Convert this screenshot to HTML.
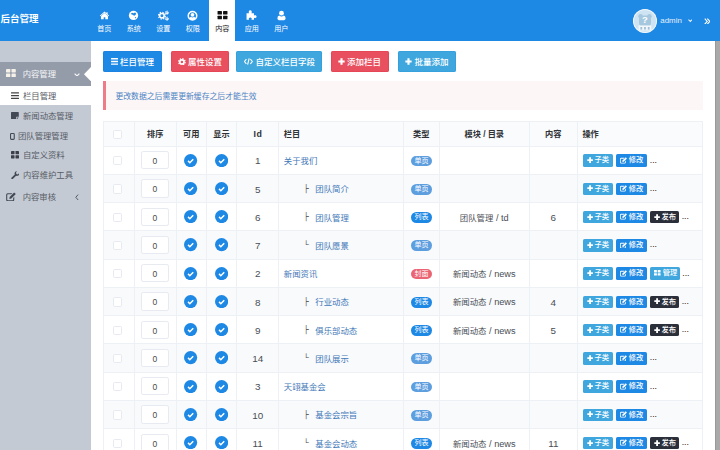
<!DOCTYPE html>
<html lang="zh-CN">
<head>
<meta charset="utf-8">
<title>后台管理</title>
<style>
*{box-sizing:border-box;margin:0;padding:0}
html,body{width:720px;height:450px;overflow:hidden;background:#fff}
body{font-family:"Liberation Sans","Noto Sans CJK SC",sans-serif;font-size:8.4px;color:#444;position:relative;-webkit-text-size-adjust:none}
svg{display:block}
/* header */
#hd{position:absolute;left:0;top:0;width:720px;height:40.8px;background:#1e88e5}
#logo{position:absolute;left:0.5px;top:10px;height:18px;line-height:18px;font-size:9.5px;font-weight:bold;color:#fff;white-space:nowrap}
.nv{position:absolute;top:0;width:26.3px;height:40.8px;color:#fff;text-align:center}
.nv svg{position:absolute;left:50%;top:10px;width:11px;height:11px;margin-left:-5.5px;fill:#fff}
.nv span{position:absolute;left:-4px;right:-4px;top:24.2px;font-size:7.1px;line-height:10px;white-space:nowrap}
.nv.on{background:#fff;color:#222}
.nv.on svg{fill:#111}
#ava{position:absolute;left:633px;top:8.5px;width:24px;height:24px;border-radius:50%;background:#d3e7f5;overflow:hidden}
#adm{position:absolute;left:660.3px;top:14.9px;font-size:7.9px;line-height:12px;color:#e3f0fc}
/* sidebar */
#sb{position:absolute;left:0;top:40.8px;width:91px;height:410px;background:#c4cad4}
.mh{position:absolute;left:0;width:91px;height:23.4px;color:#f4f6f9}
.mh.on{background:#959ca9}
.mh span,.mi span{position:absolute;white-space:nowrap;font-size:8.35px;line-height:12px}
.mi{position:absolute;left:0;width:91px;height:19.6px;color:#575c65}
.mi.on{background:#fff}
#sb svg{position:absolute}
/* main */
#scr{position:absolute;left:714.8px;top:40.8px;width:5.2px;height:410px;background:#a9a9a9;border-left:0.6px solid #999}
.btn{position:absolute;top:51.2px;height:20.5px;border-radius:2.2px;color:#fff;font-weight:500;font-size:8.5px;line-height:20.5px;white-space:nowrap}
.btn svg{position:absolute;fill:#fff}
.btn span{position:absolute;top:1px}
.b1{background:#1e88e5;box-shadow:inset 0 0 0 0.6px #1a7edb}.b2{background:#e8505f;box-shadow:inset 0 0 0 0.6px #e33f50}.b3{background:#3fa7de;box-shadow:inset 0 0 0 0.6px #2f9bdc}
#al{position:absolute;left:103px;top:80.8px;width:600px;height:29px;background:#fdf6f6;border-left:3.1px solid #ee7b88;color:#4a84c4;font-size:7.85px;line-height:31.2px;padding-left:9.4px;white-space:nowrap}
/* table */
#tb{position:absolute;left:102.8px;top:121.4px;width:599.4px;border-collapse:collapse;table-layout:fixed;font-size:8.4px}
#tb th,#tb td{border:0.6px solid #edf0f5;padding:0;text-align:center;vertical-align:middle;white-space:nowrap;overflow:hidden}
#tb th{height:24.2px;background:#fafbfd;color:#2f3338;font-weight:bold;font-size:8.2px;padding-bottom:1.4px}
#tb th .cb{position:relative;top:0.7px}
#tb td{height:28.25px;color:#4a4e55}
#tb td.n,.en{font-size:9.2px}
#tb td.n{padding-top:1.4px;font-size:9.9px}
.cj{position:relative;top:0}
#tb tr.ev td{background:#f9fafc}
#tb .l{text-align:left;padding-left:4.6px}
.cb{display:inline-block;width:9.4px;height:9.2px;border:0.7px solid #e8eaf2;border-radius:1.7px;margin-right:2.2px;background:#fff;vertical-align:middle}
.ip{display:inline-block;width:27.4px;height:18.1px;border:0.7px solid #e8eaf2;border-radius:2.2px;line-height:18px;background:#fff;color:#4a4a4a;font-size:8.5px;vertical-align:middle;position:relative;left:-0.4px}
.ck{display:inline-block;width:13.2px;height:13.2px;vertical-align:middle;position:relative;left:-0.4px}
a{color:#3f78b8;text-decoration:none;position:relative;top:0}
.tr1{display:inline-block;width:19.7px}
.tg{display:inline-block;width:11.8px;color:#444;font-size:7.5px;font-weight:bold;position:relative;top:-1.6px}
.bd{display:inline-block;width:21px;height:10.7px;line-height:10.7px;border-radius:5.4px;color:#fff;font-size:7px;vertical-align:middle;position:relative;top:0.6px;left:0.3px}
.d1{background:#5d9edf}.d2{background:#1e88e5}.d3{background:#ea6474}
.ob{display:inline-block;position:relative;top:0.3px;height:12.5px;line-height:12.5px;border-radius:1.6px;margin-right:0.6px;color:#fff;font-size:7.3px;font-weight:500;vertical-align:middle;margin-right:2.95px;text-align:left}
#tb td.op{padding-left:5.2px}
.ob svg{position:absolute;fill:#fff}
.o1{width:29.6px;background:#3fa7de;padding-left:11.5px}
.o2{width:31px;background:#1e88e5;padding-left:13.2px;margin-right:3.7px}
.o3{width:29px;background:#2b2f3a;padding-left:11.2px}
.o4{width:29.6px;background:#3fa7de;padding-left:12.6px}
.dots{display:inline-block;vertical-align:middle;color:#1a1a1a;font-size:8.6px;line-height:9px;position:relative;top:0;left:-0.4px}
</style>
</head>
<body>
<div id="hd">
  <div id="logo">后台管理</div>
  <div class="nv" style="left:91.15px"><svg viewBox="0 0 16 16"><path d="M8 2.3 L1.2 8.2 L2.1 9.2 L8 4.1 L13.9 9.2 L14.8 8.2 L12.5 6.2 V3.1 H10.8 V4.7 Z"/><path d="M8 4.5 L3 8.8 V13.1 Q3 13.5 3.4 13.5 H6.8 V10.4 H9.2 V13.5 H12.6 Q13 13.5 13 13.1 V8.8 Z"/></svg><span>首页</span></div>
  <div class="nv" style="left:120.65px"><svg viewBox="0 0 16 16"><circle cx="8" cy="7.9" r="6.8"/><path fill="#1e88e5" d="M4.6 4.6 Q5.8 3.2 7.2 4.4 Q8 5.2 8.8 4.2 Q10.4 3 11.6 4.6 Q12 6.6 10.2 7.8 Q8.8 8.8 7.8 7.6 Q7 6.6 5.4 6.6 Q4.2 5.8 4.6 4.6 Z M10.4 10.4 Q11.6 10 11.8 11.2 Q11.2 12.4 10.2 12 Q9.8 11 10.4 10.4Z"/></svg><span>系统</span></div>
  <div class="nv" style="left:150.15px"><svg viewBox="0 0 16 16"><g fill="none" stroke="#fff"><circle cx="5.7" cy="8.3" r="3.3" stroke-width="2.3"/><circle cx="5.7" cy="8.3" r="5" stroke-width="1.7" stroke-dasharray="2 1.927"/><circle cx="12.9" cy="3.9" r="1.5" stroke-width="1.5"/><circle cx="12.9" cy="3.9" r="2.6" stroke-width="1.1" stroke-dasharray="1.2 1.52"/><circle cx="12.9" cy="12.7" r="1.5" stroke-width="1.5"/><circle cx="12.9" cy="12.7" r="2.6" stroke-width="1.1" stroke-dasharray="1.2 1.52"/></g></svg><span>设置</span></div>
  <div class="nv" style="left:179.65px"><svg viewBox="0 0 16 16"><path fill-rule="evenodd" d="M8 1 A7.3 7.3 0 1 0 8 15.6 A7.3 7.3 0 1 0 8 1 Z M8 3.1 A5.2 5.2 0 0 1 11.9 11.7 Q11.5 10 10.2 9.7 A3 3 0 0 1 5.8 9.7 Q4.5 10 4.1 11.7 A5.2 5.2 0 0 1 8 3.1 Z"/><circle cx="8" cy="7" r="2.7"/></svg><span>权限</span></div>
  <div class="nv on" style="left:209.15px"><svg viewBox="0 0 16 16"><rect x="0.8" y="1.5" width="6.4" height="5.2" rx="0.8"/><rect x="8.8" y="1.5" width="6.4" height="5.2" rx="0.8"/><rect x="0.8" y="8.3" width="6.4" height="5.2" rx="0.8"/><rect x="8.8" y="8.3" width="6.4" height="5.2" rx="0.8"/></svg><span>内容</span></div>
  <div class="nv" style="left:238.65px"><svg viewBox="0 0 16 16"><path d="M0.8 4.9 H4.6 Q3.8 3.6 4 2.4 Q4.4 0.5 6.2 0.5 Q8 0.5 8.4 2.4 Q8.6 3.6 7.8 4.9 H11.6 V8.2 Q12.6 7.2 13.8 7.5 Q15.4 8 15.4 9.6 Q15.4 11.2 13.8 11.7 Q12.6 12 11.6 11 V14.2 H7.8 Q8.6 13 8.2 11.9 Q7.6 10.8 6.2 10.8 Q4.8 10.8 4.2 11.9 Q3.8 13 4.6 14.2 H0.8 Z"/></svg><span>应用</span></div>
  <div class="nv" style="left:268.15px"><svg viewBox="0 0 16 16"><circle cx="8" cy="4.6" r="3.5"/><path d="M4.8 8 Q2.2 8.4 2 12 Q2 14.6 4.2 14.8 H11.8 Q14 14.6 14 12 Q13.8 8.4 11.2 8 Q9.8 9.4 8 9.4 Q6.2 9.4 4.8 8Z"/></svg><span>用户</span></div>
  <div id="ava"><svg viewBox="0 0 24 24" width="24" height="24"><circle cx="12" cy="12" r="12" fill="#f2f8fc"/><circle cx="12" cy="12" r="11.1" fill="#cfe4f3"/><circle cx="7.6" cy="7.2" r="2.3" fill="#a6c8df"/><circle cx="16.4" cy="7.2" r="2.3" fill="#a6c8df"/><rect x="6" y="6.4" width="12" height="11.4" rx="4" fill="#a6c8df"/><rect x="5.6" y="16.4" width="12.8" height="5" fill="#f1f7fb"/><rect x="7.4" y="18" width="1.8" height="2.6" fill="#9fc0d6"/><rect x="11.1" y="18" width="1.8" height="2.6" fill="#9fc0d6"/><rect x="14.8" y="18" width="1.8" height="2.6" fill="#9fc0d6"/><text x="12" y="14.2" font-size="9.5" font-weight="bold" fill="#fff" text-anchor="middle" font-family="Liberation Sans, sans-serif">?</text></svg></div>
  <div id="adm">admin</div>
  <svg style="position:absolute;left:687.5px;top:19.4px" width="4.6" height="3.2" viewBox="0 0 10 7"><path d="M1 1.2 L5 5.4 L9 1.2" fill="none" stroke="#e3f0fc" stroke-width="2.2"/></svg>
  <svg style="position:absolute;left:703.9px;top:17.6px" width="6.6" height="6.8" viewBox="0 0 13.2 13.6"><path d="M1.5 1.2 L6.5 6.8 L1.5 12.4 M6.7 1.2 L11.7 6.8 L6.7 12.4" fill="none" stroke="#fff" stroke-width="2.2"/></svg>
</div>
<div id="sb">
  <div class="mh on" style="top:21.6px">
    <svg style="left:6px;top:6.8px;fill:#f5f1e8" width="9.8" height="8.2" viewBox="0 0 10 8.2"><rect x="0" y="0" width="4.4" height="3.6" rx="0.5"/><rect x="5.6" y="0" width="4.4" height="3.6" rx="0.5"/><rect x="0" y="4.6" width="4.4" height="3.6" rx="0.5"/><rect x="5.6" y="4.6" width="4.4" height="3.6" rx="0.5"/></svg>
    <span style="left:22.7px;top:5.7px">内容管理</span>
    <svg style="left:74px;top:10.2px" width="6" height="3.6" viewBox="0 0 10 6"><path d="M1 1 L5 5 L9 1" fill="none" stroke="#f4f6f9" stroke-width="1.9"/></svg>
    <svg style="left:84px;top:4.4px" width="7" height="14.4" viewBox="0 0 7 14.4"><path d="M7 0 L0 7.2 L7 14.4 Z" fill="#fff"/></svg>
  </div>
  <div class="mi on" style="top:44.8px">
    <svg style="left:11px;top:6.6px;fill:#444" width="8" height="7.2" viewBox="0 0 8 7.2"><rect x="0" y="0.3" width="8" height="1.3" rx="0.3"/><rect x="0" y="3" width="8" height="1.3" rx="0.3"/><rect x="0" y="5.7" width="8" height="1.3" rx="0.3"/></svg>
    <span style="left:23px;top:4px">栏目管理</span>
  </div>
  <div class="mi" style="top:65px">
    <svg style="left:11.4px;top:6.3px;fill:#444a55" width="7.8" height="7.4" viewBox="0 0 7.4 7.4" preserveAspectRatio="none"><path d="M0.5 0 H6.9 Q7.4 0 7.4 0.5 V4.8 H5.3 Q4.8 4.8 4.8 5.3 V7.4 H0.5 Q0 7.4 0 6.9 V0.5 Q0 0 0.5 0 Z M5.5 5.5 H7.3 L5.5 7.3 Z"/></svg>
    <span style="left:23px;top:4px">新闻动态管理</span>
  </div>
  <div class="mi" style="top:85px">
    <svg style="left:10.1px;top:7.3px" width="4.8" height="6.9" viewBox="0 0 4.8 6.9"><rect x="0.55" y="0.55" width="3.7" height="5.8" rx="0.8" fill="none" stroke="#444a55" stroke-width="1.1"/></svg>
    <span style="left:18px;top:4px">团队管理管理</span>
  </div>
  <div class="mi" style="top:104.7px">
    <svg style="left:11px;top:6px;fill:#3a3f48" width="8" height="7.4" viewBox="0 0 10 8.2" preserveAspectRatio="none"><rect x="0" y="0" width="4.4" height="3.6" rx="0.5"/><rect x="5.6" y="0" width="4.4" height="3.6" rx="0.5"/><rect x="0" y="4.6" width="4.4" height="3.6" rx="0.5"/><rect x="5.6" y="4.6" width="4.4" height="3.6" rx="0.5"/></svg>
    <span style="left:23px;top:4px">自定义资料</span>
  </div>
  <div class="mi" style="top:124.7px">
    <svg style="left:10.8px;top:5.4px;fill:#444a55" width="8.6" height="8.6" viewBox="0 0 10 10"><path d="M6.9 0.3 Q5.2 0.2 4.4 1.6 Q3.9 2.8 4.4 4 L0.5 7.9 Q0 8.6 0.6 9.3 Q1.3 9.9 2 9.4 L5.9 5.5 Q7.4 6 8.6 5.1 Q9.8 4.1 9.5 2.5 L7.9 4.1 L6.3 3.6 L5.8 2 Z"/></svg>
    <span style="left:23px;top:4px">内容维护工具</span>
  </div>
  <div class="mh" style="top:144.6px;color:#575c65">
    <svg style="left:5.8px;top:6.2px;fill:#444a55" width="10" height="9.4" viewBox="0 0 10 9.5"><path d="M1.6 1.2 H6.4 L5.3 2.3 H1.9 Q1.2 2.3 1.2 3 V7.6 Q1.2 8.3 1.9 8.3 H6.5 Q7.2 8.3 7.2 7.6 V6 L8.3 4.9 V7.8 Q8.3 9.4 6.7 9.4 H1.7 Q0.1 9.4 0.1 7.8 V2.8 Q0.1 1.2 1.6 1.2 Z"/><path d="M3.6 5 L8.2 0.4 L9.9 2.1 L5.3 6.7 L3.4 7 Z"/></svg>
    <span style="left:22.7px;top:5.7px">内容审核</span>
    <svg style="left:75px;top:8.2px" width="3.8" height="6.6" viewBox="0 0 5 9"><path d="M4.2 0.8 L1 4.5 L4.2 8.2" fill="none" stroke="#50545c" stroke-width="1.3"/></svg>
  </div>
</div>
<div id="scr"></div>
<div id="main">
  <div class="btn b1" style="left:103px;width:59px"><svg style="left:7.9px;top:7px" width="7.3" height="6.85" viewBox="0 0 7.3 6.85"><rect x="0" y="0" width="7.3" height="1.45" rx="0.3"/><rect x="0" y="2.7" width="7.3" height="1.45" rx="0.3"/><rect x="0" y="5.4" width="7.3" height="1.45" rx="0.3"/></svg><span style="left:17px">栏目管理</span></div>
  <div class="btn b2" style="left:170.6px;width:58.7px"><svg style="left:7.6px;top:6.5px" width="7.8" height="7.8" viewBox="0 0 10 10"><g fill="none" stroke="#fff"><circle cx="5" cy="5" r="2.7" stroke-width="2.2"/><circle cx="5" cy="5" r="4.1" stroke-width="1.7" stroke-dasharray="1.7 1.52"/></g></svg><span style="left:17.3px">属性设置</span></div>
  <div class="btn b3" style="left:235.8px;width:86.4px"><svg style="left:8.2px;top:6.9px" width="8.8" height="7" viewBox="0 0 10 8"><path d="M2.7 1.4 L0.5 4 L2.7 6.6 M7.3 1.4 L9.5 4 L7.3 6.6 M5.9 0.4 L4.1 7.6" fill="none" stroke="#fff" stroke-width="1.25"/></svg><span style="left:19.7px">自定义栏目字段</span></div>
  <div class="btn b2" style="left:330.5px;width:58.3px"><svg style="left:7.6px;top:6.9px" width="7" height="7" viewBox="0 0 10 10"><path d="M3.5 0.5 H6.5 V3.5 H9.5 V6.5 H6.5 V9.5 H3.5 V6.5 H0.5 V3.5 H3.5 Z"/></svg><span style="left:16.5px">添加栏目</span></div>
  <div class="btn b3" style="left:397.5px;width:58.3px"><svg style="left:7.8px;top:6.9px" width="7" height="7" viewBox="0 0 10 10"><path d="M3.5 0.5 H6.5 V3.5 H9.5 V6.5 H6.5 V9.5 H3.5 V6.5 H0.5 V3.5 H3.5 Z"/></svg><span style="left:17px">批量添加</span></div>
  <div id="al">更改数据之后需要更新缓存之后才能生效</div>
<table id="tb"><colgroup><col style="width:31px"><col style="width:42px"><col style="width:30px"><col style="width:30.4px"><col style="width:42px"><col style="width:124.6px"><col style="width:36px"><col style="width:90px"><col style="width:48px"><col style="width:125.4px"></colgroup>
<thead><tr><th><i class="cb"></i></th><th>排序</th><th>可用</th><th>显示</th><th><span class="en" style="font-size:8.8px;letter-spacing:0.6px;position:relative;top:0.3px;left:0.3px">Id</span></th><th class="l">栏目</th><th>类型</th><th>模块 / 目录</th><th>内容</th><th class="l">操作</th></tr></thead>
<tbody>
<tr><td><i class="cb"></i></td><td><span class="ip">0</span></td><td><svg class="ck" viewBox="0 0 14 14"><circle cx="7" cy="7" r="7" fill="#1e88e5"/><path d="M4.3 7.3 L6.2 9.2 L9.8 5.5" fill="none" stroke="#fff" stroke-width="1.6"/></svg></td><td><svg class="ck" viewBox="0 0 14 14"><circle cx="7" cy="7" r="7" fill="#1e88e5"/><path d="M4.3 7.3 L6.2 9.2 L9.8 5.5" fill="none" stroke="#fff" stroke-width="1.6"/></svg></td><td class="n">1</td><td class="l"><a>关于我们</a></td><td><span class="bd d1">单页</span></td><td></td><td></td><td class="l op"><span class="ob o1"><svg style="left:3.6px;top:2.9px" width="6.2" height="6.2" viewBox="0 0 10 10"><path d="M3.5 0.5 H6.5 V3.5 H9.5 V6.5 H6.5 V9.5 H3.5 V6.5 H0.5 V3.5 H3.5 Z"/></svg>子类</span><span class="ob o2"><svg style="left:4px;top:2.6px" width="7" height="6.7" viewBox="0 0 10 9.5"><path d="M1.6 1.2 H6.4 L5.3 2.3 H1.9 Q1.2 2.3 1.2 3 V7.6 Q1.2 8.3 1.9 8.3 H6.5 Q7.2 8.3 7.2 7.6 V6 L8.3 4.9 V7.8 Q8.3 9.4 6.7 9.4 H1.7 Q0.1 9.4 0.1 7.8 V2.8 Q0.1 1.2 1.6 1.2 Z"/><path d="M3.6 5 L8.2 0.4 L9.9 2.1 L5.3 6.7 L3.4 7 Z"/></svg>修改</span><span class="dots">...</span></td></tr>
<tr class="ev"><td><i class="cb"></i></td><td><span class="ip">0</span></td><td><svg class="ck" viewBox="0 0 14 14"><circle cx="7" cy="7" r="7" fill="#1e88e5"/><path d="M4.3 7.3 L6.2 9.2 L9.8 5.5" fill="none" stroke="#fff" stroke-width="1.6"/></svg></td><td><svg class="ck" viewBox="0 0 14 14"><circle cx="7" cy="7" r="7" fill="#1e88e5"/><path d="M4.3 7.3 L6.2 9.2 L9.8 5.5" fill="none" stroke="#fff" stroke-width="1.6"/></svg></td><td class="n">5</td><td class="l"><span class="tr1"></span><span class="tg">├</span><a>团队简介</a></td><td><span class="bd d1">单页</span></td><td></td><td></td><td class="l op"><span class="ob o1"><svg style="left:3.6px;top:2.9px" width="6.2" height="6.2" viewBox="0 0 10 10"><path d="M3.5 0.5 H6.5 V3.5 H9.5 V6.5 H6.5 V9.5 H3.5 V6.5 H0.5 V3.5 H3.5 Z"/></svg>子类</span><span class="ob o2"><svg style="left:4px;top:2.6px" width="7" height="6.7" viewBox="0 0 10 9.5"><path d="M1.6 1.2 H6.4 L5.3 2.3 H1.9 Q1.2 2.3 1.2 3 V7.6 Q1.2 8.3 1.9 8.3 H6.5 Q7.2 8.3 7.2 7.6 V6 L8.3 4.9 V7.8 Q8.3 9.4 6.7 9.4 H1.7 Q0.1 9.4 0.1 7.8 V2.8 Q0.1 1.2 1.6 1.2 Z"/><path d="M3.6 5 L8.2 0.4 L9.9 2.1 L5.3 6.7 L3.4 7 Z"/></svg>修改</span><span class="dots">...</span></td></tr>
<tr><td><i class="cb"></i></td><td><span class="ip">0</span></td><td><svg class="ck" viewBox="0 0 14 14"><circle cx="7" cy="7" r="7" fill="#1e88e5"/><path d="M4.3 7.3 L6.2 9.2 L9.8 5.5" fill="none" stroke="#fff" stroke-width="1.6"/></svg></td><td><svg class="ck" viewBox="0 0 14 14"><circle cx="7" cy="7" r="7" fill="#1e88e5"/><path d="M4.3 7.3 L6.2 9.2 L9.8 5.5" fill="none" stroke="#fff" stroke-width="1.6"/></svg></td><td class="n">6</td><td class="l"><span class="tr1"></span><span class="tg">├</span><a>团队管理</a></td><td><span class="bd d2">列表</span></td><td><span class="cj">团队管理<span class="en"> / td</span></span></td><td class="n">6</td><td class="l op"><span class="ob o1"><svg style="left:3.6px;top:2.9px" width="6.2" height="6.2" viewBox="0 0 10 10"><path d="M3.5 0.5 H6.5 V3.5 H9.5 V6.5 H6.5 V9.5 H3.5 V6.5 H0.5 V3.5 H3.5 Z"/></svg>子类</span><span class="ob o2"><svg style="left:4px;top:2.6px" width="7" height="6.7" viewBox="0 0 10 9.5"><path d="M1.6 1.2 H6.4 L5.3 2.3 H1.9 Q1.2 2.3 1.2 3 V7.6 Q1.2 8.3 1.9 8.3 H6.5 Q7.2 8.3 7.2 7.6 V6 L8.3 4.9 V7.8 Q8.3 9.4 6.7 9.4 H1.7 Q0.1 9.4 0.1 7.8 V2.8 Q0.1 1.2 1.6 1.2 Z"/><path d="M3.6 5 L8.2 0.4 L9.9 2.1 L5.3 6.7 L3.4 7 Z"/></svg>修改</span><span class="ob o3"><svg style="left:3.4px;top:2.9px" width="6.2" height="6.2" viewBox="0 0 10 10"><path d="M3.5 0.5 H6.5 V3.5 H9.5 V6.5 H6.5 V9.5 H3.5 V6.5 H0.5 V3.5 H3.5 Z"/></svg>发布</span><span class="dots">...</span></td></tr>
<tr class="ev"><td><i class="cb"></i></td><td><span class="ip">0</span></td><td><svg class="ck" viewBox="0 0 14 14"><circle cx="7" cy="7" r="7" fill="#1e88e5"/><path d="M4.3 7.3 L6.2 9.2 L9.8 5.5" fill="none" stroke="#fff" stroke-width="1.6"/></svg></td><td><svg class="ck" viewBox="0 0 14 14"><circle cx="7" cy="7" r="7" fill="#1e88e5"/><path d="M4.3 7.3 L6.2 9.2 L9.8 5.5" fill="none" stroke="#fff" stroke-width="1.6"/></svg></td><td class="n">7</td><td class="l"><span class="tr1"></span><span class="tg">└</span><a>团队愿景</a></td><td><span class="bd d1">单页</span></td><td></td><td></td><td class="l op"><span class="ob o1"><svg style="left:3.6px;top:2.9px" width="6.2" height="6.2" viewBox="0 0 10 10"><path d="M3.5 0.5 H6.5 V3.5 H9.5 V6.5 H6.5 V9.5 H3.5 V6.5 H0.5 V3.5 H3.5 Z"/></svg>子类</span><span class="ob o2"><svg style="left:4px;top:2.6px" width="7" height="6.7" viewBox="0 0 10 9.5"><path d="M1.6 1.2 H6.4 L5.3 2.3 H1.9 Q1.2 2.3 1.2 3 V7.6 Q1.2 8.3 1.9 8.3 H6.5 Q7.2 8.3 7.2 7.6 V6 L8.3 4.9 V7.8 Q8.3 9.4 6.7 9.4 H1.7 Q0.1 9.4 0.1 7.8 V2.8 Q0.1 1.2 1.6 1.2 Z"/><path d="M3.6 5 L8.2 0.4 L9.9 2.1 L5.3 6.7 L3.4 7 Z"/></svg>修改</span><span class="dots">...</span></td></tr>
<tr><td><i class="cb"></i></td><td><span class="ip">0</span></td><td><svg class="ck" viewBox="0 0 14 14"><circle cx="7" cy="7" r="7" fill="#1e88e5"/><path d="M4.3 7.3 L6.2 9.2 L9.8 5.5" fill="none" stroke="#fff" stroke-width="1.6"/></svg></td><td><svg class="ck" viewBox="0 0 14 14"><circle cx="7" cy="7" r="7" fill="#1e88e5"/><path d="M4.3 7.3 L6.2 9.2 L9.8 5.5" fill="none" stroke="#fff" stroke-width="1.6"/></svg></td><td class="n">2</td><td class="l"><a>新闻资讯</a></td><td><span class="bd d3">封面</span></td><td><span class="cj">新闻动态<span class="en"> / news</span></span></td><td></td><td class="l op"><span class="ob o1"><svg style="left:3.6px;top:2.9px" width="6.2" height="6.2" viewBox="0 0 10 10"><path d="M3.5 0.5 H6.5 V3.5 H9.5 V6.5 H6.5 V9.5 H3.5 V6.5 H0.5 V3.5 H3.5 Z"/></svg>子类</span><span class="ob o2"><svg style="left:4px;top:2.6px" width="7" height="6.7" viewBox="0 0 10 9.5"><path d="M1.6 1.2 H6.4 L5.3 2.3 H1.9 Q1.2 2.3 1.2 3 V7.6 Q1.2 8.3 1.9 8.3 H6.5 Q7.2 8.3 7.2 7.6 V6 L8.3 4.9 V7.8 Q8.3 9.4 6.7 9.4 H1.7 Q0.1 9.4 0.1 7.8 V2.8 Q0.1 1.2 1.6 1.2 Z"/><path d="M3.6 5 L8.2 0.4 L9.9 2.1 L5.3 6.7 L3.4 7 Z"/></svg>修改</span><span class="ob o4"><svg style="left:4px;top:3.2px" width="6.6" height="5.6" viewBox="0 0 10 8.2" preserveAspectRatio="none"><rect x="0" y="0" width="4.4" height="3.6" rx="0.5"/><rect x="5.6" y="0" width="4.4" height="3.6" rx="0.5"/><rect x="0" y="4.6" width="4.4" height="3.6" rx="0.5"/><rect x="5.6" y="4.6" width="4.4" height="3.6" rx="0.5"/></svg>管理</span><span class="dots">...</span></td></tr>
<tr class="ev"><td><i class="cb"></i></td><td><span class="ip">0</span></td><td><svg class="ck" viewBox="0 0 14 14"><circle cx="7" cy="7" r="7" fill="#1e88e5"/><path d="M4.3 7.3 L6.2 9.2 L9.8 5.5" fill="none" stroke="#fff" stroke-width="1.6"/></svg></td><td><svg class="ck" viewBox="0 0 14 14"><circle cx="7" cy="7" r="7" fill="#1e88e5"/><path d="M4.3 7.3 L6.2 9.2 L9.8 5.5" fill="none" stroke="#fff" stroke-width="1.6"/></svg></td><td class="n">8</td><td class="l"><span class="tr1"></span><span class="tg">├</span><a>行业动态</a></td><td><span class="bd d2">列表</span></td><td><span class="cj">新闻动态<span class="en"> / news</span></span></td><td class="n">4</td><td class="l op"><span class="ob o1"><svg style="left:3.6px;top:2.9px" width="6.2" height="6.2" viewBox="0 0 10 10"><path d="M3.5 0.5 H6.5 V3.5 H9.5 V6.5 H6.5 V9.5 H3.5 V6.5 H0.5 V3.5 H3.5 Z"/></svg>子类</span><span class="ob o2"><svg style="left:4px;top:2.6px" width="7" height="6.7" viewBox="0 0 10 9.5"><path d="M1.6 1.2 H6.4 L5.3 2.3 H1.9 Q1.2 2.3 1.2 3 V7.6 Q1.2 8.3 1.9 8.3 H6.5 Q7.2 8.3 7.2 7.6 V6 L8.3 4.9 V7.8 Q8.3 9.4 6.7 9.4 H1.7 Q0.1 9.4 0.1 7.8 V2.8 Q0.1 1.2 1.6 1.2 Z"/><path d="M3.6 5 L8.2 0.4 L9.9 2.1 L5.3 6.7 L3.4 7 Z"/></svg>修改</span><span class="ob o3"><svg style="left:3.4px;top:2.9px" width="6.2" height="6.2" viewBox="0 0 10 10"><path d="M3.5 0.5 H6.5 V3.5 H9.5 V6.5 H6.5 V9.5 H3.5 V6.5 H0.5 V3.5 H3.5 Z"/></svg>发布</span><span class="dots">...</span></td></tr>
<tr><td><i class="cb"></i></td><td><span class="ip">0</span></td><td><svg class="ck" viewBox="0 0 14 14"><circle cx="7" cy="7" r="7" fill="#1e88e5"/><path d="M4.3 7.3 L6.2 9.2 L9.8 5.5" fill="none" stroke="#fff" stroke-width="1.6"/></svg></td><td><svg class="ck" viewBox="0 0 14 14"><circle cx="7" cy="7" r="7" fill="#1e88e5"/><path d="M4.3 7.3 L6.2 9.2 L9.8 5.5" fill="none" stroke="#fff" stroke-width="1.6"/></svg></td><td class="n">9</td><td class="l"><span class="tr1"></span><span class="tg">├</span><a>俱乐部动态</a></td><td><span class="bd d2">列表</span></td><td><span class="cj">新闻动态<span class="en"> / news</span></span></td><td class="n">5</td><td class="l op"><span class="ob o1"><svg style="left:3.6px;top:2.9px" width="6.2" height="6.2" viewBox="0 0 10 10"><path d="M3.5 0.5 H6.5 V3.5 H9.5 V6.5 H6.5 V9.5 H3.5 V6.5 H0.5 V3.5 H3.5 Z"/></svg>子类</span><span class="ob o2"><svg style="left:4px;top:2.6px" width="7" height="6.7" viewBox="0 0 10 9.5"><path d="M1.6 1.2 H6.4 L5.3 2.3 H1.9 Q1.2 2.3 1.2 3 V7.6 Q1.2 8.3 1.9 8.3 H6.5 Q7.2 8.3 7.2 7.6 V6 L8.3 4.9 V7.8 Q8.3 9.4 6.7 9.4 H1.7 Q0.1 9.4 0.1 7.8 V2.8 Q0.1 1.2 1.6 1.2 Z"/><path d="M3.6 5 L8.2 0.4 L9.9 2.1 L5.3 6.7 L3.4 7 Z"/></svg>修改</span><span class="ob o3"><svg style="left:3.4px;top:2.9px" width="6.2" height="6.2" viewBox="0 0 10 10"><path d="M3.5 0.5 H6.5 V3.5 H9.5 V6.5 H6.5 V9.5 H3.5 V6.5 H0.5 V3.5 H3.5 Z"/></svg>发布</span><span class="dots">...</span></td></tr>
<tr class="ev"><td><i class="cb"></i></td><td><span class="ip">0</span></td><td><svg class="ck" viewBox="0 0 14 14"><circle cx="7" cy="7" r="7" fill="#1e88e5"/><path d="M4.3 7.3 L6.2 9.2 L9.8 5.5" fill="none" stroke="#fff" stroke-width="1.6"/></svg></td><td><svg class="ck" viewBox="0 0 14 14"><circle cx="7" cy="7" r="7" fill="#1e88e5"/><path d="M4.3 7.3 L6.2 9.2 L9.8 5.5" fill="none" stroke="#fff" stroke-width="1.6"/></svg></td><td class="n">14</td><td class="l"><span class="tr1"></span><span class="tg">└</span><a>团队展示</a></td><td><span class="bd d1">单页</span></td><td></td><td></td><td class="l op"><span class="ob o1"><svg style="left:3.6px;top:2.9px" width="6.2" height="6.2" viewBox="0 0 10 10"><path d="M3.5 0.5 H6.5 V3.5 H9.5 V6.5 H6.5 V9.5 H3.5 V6.5 H0.5 V3.5 H3.5 Z"/></svg>子类</span><span class="ob o2"><svg style="left:4px;top:2.6px" width="7" height="6.7" viewBox="0 0 10 9.5"><path d="M1.6 1.2 H6.4 L5.3 2.3 H1.9 Q1.2 2.3 1.2 3 V7.6 Q1.2 8.3 1.9 8.3 H6.5 Q7.2 8.3 7.2 7.6 V6 L8.3 4.9 V7.8 Q8.3 9.4 6.7 9.4 H1.7 Q0.1 9.4 0.1 7.8 V2.8 Q0.1 1.2 1.6 1.2 Z"/><path d="M3.6 5 L8.2 0.4 L9.9 2.1 L5.3 6.7 L3.4 7 Z"/></svg>修改</span><span class="dots">...</span></td></tr>
<tr><td><i class="cb"></i></td><td><span class="ip">0</span></td><td><svg class="ck" viewBox="0 0 14 14"><circle cx="7" cy="7" r="7" fill="#1e88e5"/><path d="M4.3 7.3 L6.2 9.2 L9.8 5.5" fill="none" stroke="#fff" stroke-width="1.6"/></svg></td><td><svg class="ck" viewBox="0 0 14 14"><circle cx="7" cy="7" r="7" fill="#1e88e5"/><path d="M4.3 7.3 L6.2 9.2 L9.8 5.5" fill="none" stroke="#fff" stroke-width="1.6"/></svg></td><td class="n">3</td><td class="l"><a>天翊基金会</a></td><td><span class="bd d1">单页</span></td><td></td><td></td><td class="l op"><span class="ob o1"><svg style="left:3.6px;top:2.9px" width="6.2" height="6.2" viewBox="0 0 10 10"><path d="M3.5 0.5 H6.5 V3.5 H9.5 V6.5 H6.5 V9.5 H3.5 V6.5 H0.5 V3.5 H3.5 Z"/></svg>子类</span><span class="ob o2"><svg style="left:4px;top:2.6px" width="7" height="6.7" viewBox="0 0 10 9.5"><path d="M1.6 1.2 H6.4 L5.3 2.3 H1.9 Q1.2 2.3 1.2 3 V7.6 Q1.2 8.3 1.9 8.3 H6.5 Q7.2 8.3 7.2 7.6 V6 L8.3 4.9 V7.8 Q8.3 9.4 6.7 9.4 H1.7 Q0.1 9.4 0.1 7.8 V2.8 Q0.1 1.2 1.6 1.2 Z"/><path d="M3.6 5 L8.2 0.4 L9.9 2.1 L5.3 6.7 L3.4 7 Z"/></svg>修改</span><span class="dots">...</span></td></tr>
<tr class="ev"><td><i class="cb"></i></td><td><span class="ip">0</span></td><td><svg class="ck" viewBox="0 0 14 14"><circle cx="7" cy="7" r="7" fill="#1e88e5"/><path d="M4.3 7.3 L6.2 9.2 L9.8 5.5" fill="none" stroke="#fff" stroke-width="1.6"/></svg></td><td><svg class="ck" viewBox="0 0 14 14"><circle cx="7" cy="7" r="7" fill="#1e88e5"/><path d="M4.3 7.3 L6.2 9.2 L9.8 5.5" fill="none" stroke="#fff" stroke-width="1.6"/></svg></td><td class="n">10</td><td class="l"><span class="tr1"></span><span class="tg">├</span><a>基金会宗旨</a></td><td><span class="bd d1">单页</span></td><td></td><td></td><td class="l op"><span class="ob o1"><svg style="left:3.6px;top:2.9px" width="6.2" height="6.2" viewBox="0 0 10 10"><path d="M3.5 0.5 H6.5 V3.5 H9.5 V6.5 H6.5 V9.5 H3.5 V6.5 H0.5 V3.5 H3.5 Z"/></svg>子类</span><span class="ob o2"><svg style="left:4px;top:2.6px" width="7" height="6.7" viewBox="0 0 10 9.5"><path d="M1.6 1.2 H6.4 L5.3 2.3 H1.9 Q1.2 2.3 1.2 3 V7.6 Q1.2 8.3 1.9 8.3 H6.5 Q7.2 8.3 7.2 7.6 V6 L8.3 4.9 V7.8 Q8.3 9.4 6.7 9.4 H1.7 Q0.1 9.4 0.1 7.8 V2.8 Q0.1 1.2 1.6 1.2 Z"/><path d="M3.6 5 L8.2 0.4 L9.9 2.1 L5.3 6.7 L3.4 7 Z"/></svg>修改</span><span class="dots">...</span></td></tr>
<tr><td><i class="cb"></i></td><td><span class="ip">0</span></td><td><svg class="ck" viewBox="0 0 14 14"><circle cx="7" cy="7" r="7" fill="#1e88e5"/><path d="M4.3 7.3 L6.2 9.2 L9.8 5.5" fill="none" stroke="#fff" stroke-width="1.6"/></svg></td><td><svg class="ck" viewBox="0 0 14 14"><circle cx="7" cy="7" r="7" fill="#1e88e5"/><path d="M4.3 7.3 L6.2 9.2 L9.8 5.5" fill="none" stroke="#fff" stroke-width="1.6"/></svg></td><td class="n">11</td><td class="l"><span class="tr1"></span><span class="tg">└</span><a>基金会动态</a></td><td><span class="bd d2">列表</span></td><td><span class="cj">新闻动态<span class="en"> / news</span></span></td><td class="n">11</td><td class="l op"><span class="ob o1"><svg style="left:3.6px;top:2.9px" width="6.2" height="6.2" viewBox="0 0 10 10"><path d="M3.5 0.5 H6.5 V3.5 H9.5 V6.5 H6.5 V9.5 H3.5 V6.5 H0.5 V3.5 H3.5 Z"/></svg>子类</span><span class="ob o2"><svg style="left:4px;top:2.6px" width="7" height="6.7" viewBox="0 0 10 9.5"><path d="M1.6 1.2 H6.4 L5.3 2.3 H1.9 Q1.2 2.3 1.2 3 V7.6 Q1.2 8.3 1.9 8.3 H6.5 Q7.2 8.3 7.2 7.6 V6 L8.3 4.9 V7.8 Q8.3 9.4 6.7 9.4 H1.7 Q0.1 9.4 0.1 7.8 V2.8 Q0.1 1.2 1.6 1.2 Z"/><path d="M3.6 5 L8.2 0.4 L9.9 2.1 L5.3 6.7 L3.4 7 Z"/></svg>修改</span><span class="ob o3"><svg style="left:3.4px;top:2.9px" width="6.2" height="6.2" viewBox="0 0 10 10"><path d="M3.5 0.5 H6.5 V3.5 H9.5 V6.5 H6.5 V9.5 H3.5 V6.5 H0.5 V3.5 H3.5 Z"/></svg>发布</span><span class="dots">...</span></td></tr>
<tr class="ev"><td><i class="cb"></i></td><td><span class="ip">0</span></td><td><svg class="ck" viewBox="0 0 14 14"><circle cx="7" cy="7" r="7" fill="#1e88e5"/><path d="M4.3 7.3 L6.2 9.2 L9.8 5.5" fill="none" stroke="#fff" stroke-width="1.6"/></svg></td><td><svg class="ck" viewBox="0 0 14 14"><circle cx="7" cy="7" r="7" fill="#1e88e5"/><path d="M4.3 7.3 L6.2 9.2 L9.8 5.5" fill="none" stroke="#fff" stroke-width="1.6"/></svg></td><td class="n">12</td><td class="l"><a>联系我们</a></td><td><span class="bd d1">单页</span></td><td></td><td></td><td class="l op"><span class="ob o1"><svg style="left:3.6px;top:2.9px" width="6.2" height="6.2" viewBox="0 0 10 10"><path d="M3.5 0.5 H6.5 V3.5 H9.5 V6.5 H6.5 V9.5 H3.5 V6.5 H0.5 V3.5 H3.5 Z"/></svg>子类</span><span class="ob o2"><svg style="left:4px;top:2.6px" width="7" height="6.7" viewBox="0 0 10 9.5"><path d="M1.6 1.2 H6.4 L5.3 2.3 H1.9 Q1.2 2.3 1.2 3 V7.6 Q1.2 8.3 1.9 8.3 H6.5 Q7.2 8.3 7.2 7.6 V6 L8.3 4.9 V7.8 Q8.3 9.4 6.7 9.4 H1.7 Q0.1 9.4 0.1 7.8 V2.8 Q0.1 1.2 1.6 1.2 Z"/><path d="M3.6 5 L8.2 0.4 L9.9 2.1 L5.3 6.7 L3.4 7 Z"/></svg>修改</span><span class="dots">...</span></td></tr>
</tbody></table>
</div>
</body>
</html>
